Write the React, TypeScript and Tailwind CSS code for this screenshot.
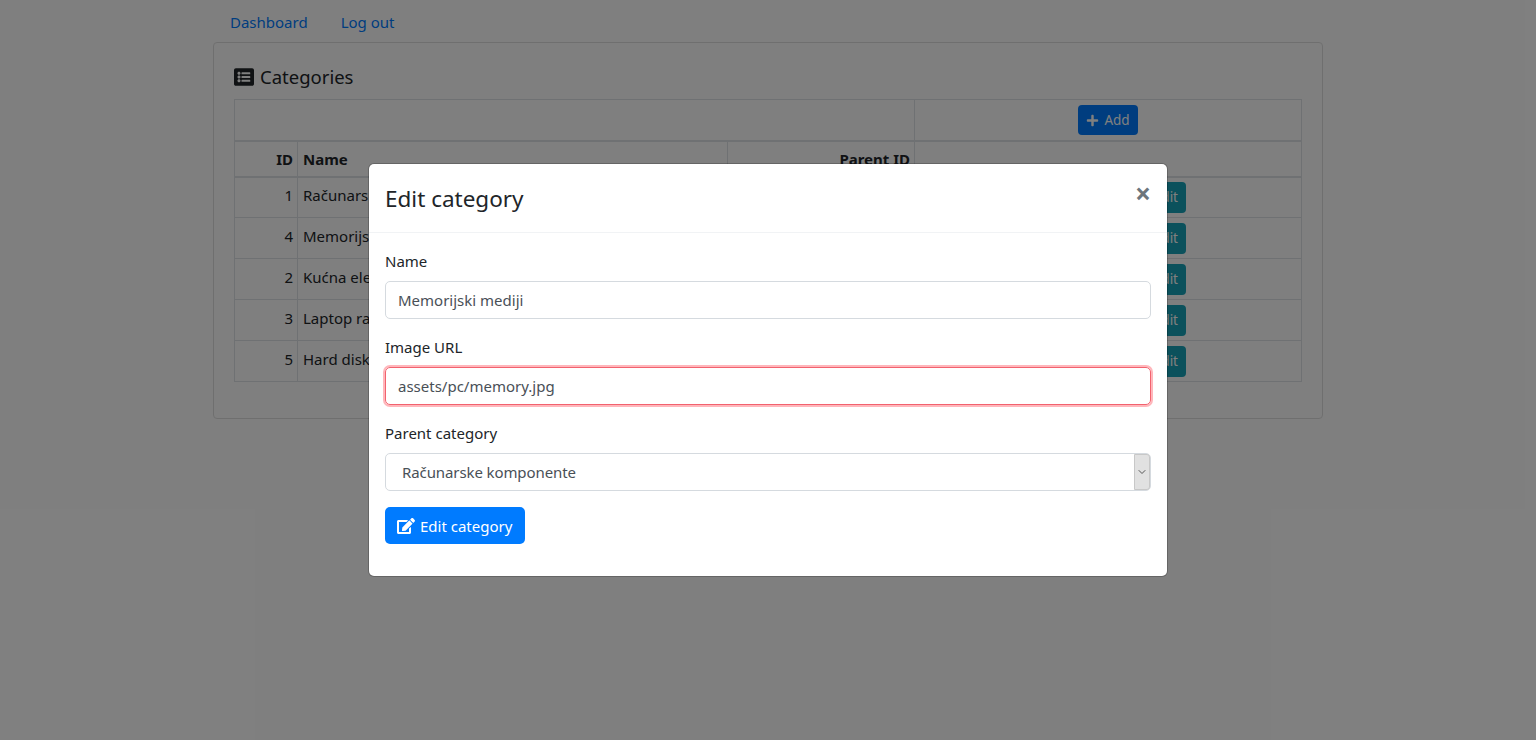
import React from "react";
import { FaListAlt, FaPlus, FaEdit } from "react-icons/fa";
import { ChevronDown } from "lucide-react";

const rows: [number, string][] = [
  [1, "Računarske komponente"],
  [4, "Memorijski mediji"],
  [2, "Kućna elektronika"],
  [3, "Laptop računari"],
  [5, "Hard diskovi"],
];

export default function App() {
  return (
    <div className="relative h-[740px] overflow-hidden bg-white text-[15px] leading-[24px] text-[#212529] font-['Noto_Sans','Open_Sans',sans-serif]">
      <div className="mx-auto w-[1110px]">
        <nav className="flex h-[42px] items-start">
          <a className="pl-[17px] pr-[17px] pt-[10px] text-[#007bff]">Dashboard</a>
          <a className="px-4 pt-[10px] text-[#007bff]">Log out</a>
        </nav>
        <div className="h-[377px] rounded border border-[#dfdfdf] px-5 pt-[19px]">
          <h5 className="mb-[7px] flex h-[30px] items-center gap-[6px] text-[18.5px]">
            <FaListAlt className="h-5 w-5" />
            <span>Categories</span>
          </h5>
          <table className="w-[1068px] table-fixed border-collapse border border-[#dee2e6]">
            <colgroup>
              <col className="w-[63px]" />
              <col className="w-[430px]" />
              <col className="w-[187px]" />
              <col />
            </colgroup>
            <tbody>
              <tr className="h-[41px] border-b-2 border-[#dee2e6]">
                <td colSpan={3} className="border border-[#dee2e6]" />
                <td className="border border-[#dee2e6] pt-[1px] text-center">
                  <button className="inline-flex h-[30px] items-center gap-[5px] rounded bg-[#007bff] px-[8px] text-[13.5px] text-white">
                    <FaPlus className="h-[13px] w-[13px]" /> Add
                  </button>
                </td>
              </tr>
              <tr className="h-[36px] border-b-2 border-[#dee2e6] font-bold">
                <td className="border border-[#dee2e6] pl-[5px] pr-[4px] text-right">ID</td>
                <td className="border border-[#dee2e6] px-[5px]">Name</td>
                <td className="border border-[#dee2e6] pl-[5px] pr-[4px] text-right">Parent ID</td>
                <td className="border border-[#dee2e6]" />
              </tr>
              {rows.map(([id, name]) => (
                <tr key={id} className="h-[41px]">
                  <td className="border border-[#dee2e6] pb-[5px] pl-[5px] pr-[4px] text-right">{id}</td>
                  <td className="border border-[#dee2e6] px-[5px] pb-[5px]">{name}</td>
                  <td className="border border-[#dee2e6] px-[5px] text-right" />
                  <td className="border border-[#dee2e6] text-center">
                    <button className="inline-flex h-[31px] w-[156px] items-center justify-end rounded bg-[#17a2b8] px-2 text-[13.5px] text-white">
                      <FaEdit className="mr-1 h-[14px] w-[14px]" /> Edit
                    </button>
                  </td>
                </tr>
              ))}
            </tbody>
          </table>
        </div>
      </div>

      <div className="absolute inset-0 bg-black/50" />

      <div className="absolute left-[369px] top-[164px] h-[412px] w-[798px] rounded-[5px] bg-white shadow-[0_0_0_1px_rgba(0,0,0,0.2)]">
        <div className="flex h-[69px] items-start justify-between border-b border-[#f1f3f5] px-4 pt-[17px]">
          <h5 className="text-[22.5px] leading-[36px]">Edit category</h5>
          <span className="mt-[-2px] text-[28px] font-bold leading-[28px] text-[#6c757d]">×</span>
        </div>
        <div className="px-4 pt-4">
          <label className="mb-2 block h-[24px]">Name</label>
          <div className="mb-[16px] flex h-[38px] items-center rounded-[5px] border border-[#d5dadf] px-3 text-[#495057]">Memorijski mediji</div>
          <label className="mb-2 block h-[24px]">Image URL</label>
          <div className="mb-[16px] flex h-[38px] items-center rounded-[5px] border border-[#f2626e] px-3 text-[#495057] shadow-[0_0_0_2px_rgba(255,110,120,0.5)]">assets/pc/memory.jpg</div>
          <label className="mb-2 block h-[24px]">Parent category</label>
          <div className="mb-4 flex h-[38px] items-center justify-between rounded-[5px] border border-[#d5dadf] pl-4 pr-0 text-[#495057]">
            <span className="tracking-[-0.1px]">Računarske komponente</span>
            <span className="flex h-[36px] w-[16px] items-center justify-center rounded-r-[3px] border border-[#c8c8c8] bg-[#e1e1e1]">
              <ChevronDown className="h-3 w-3 text-[#555]" />
            </span>
          </div>
          <button className="flex h-[37px] items-center gap-[5px] rounded-[5px] bg-[#007bff] pl-3 pr-[13px] text-white">
            <FaEdit className="h-[18px] w-[18px]" /> Edit category
          </button>
        </div>
      </div>
    </div>
  );
}
